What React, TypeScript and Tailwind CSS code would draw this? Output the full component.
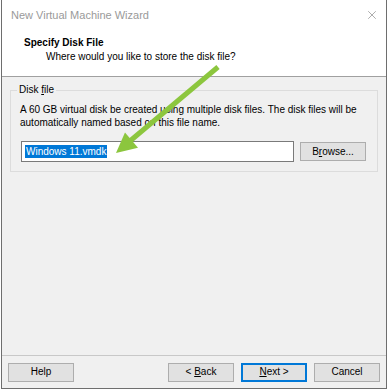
import { X } from 'lucide-react';

function WinButton({ children, primary, className = '' }: { children: React.ReactNode; primary?: boolean; className?: string }) {
  return (
    <button
      className={`h-[19px] bg-[#e1e1e1] text-[10px] text-black ${
        primary ? 'border-2 border-[#0078d7]' : 'border border-[#adadad]'
      } ${className}`}
    >
      {children}
    </button>
  );
}

export default function App() {
  return (
    <div className="relative w-[388px] h-[390px] bg-white font-['Liberation_Sans',Arial,sans-serif] text-[10px] leading-[12px] text-black">
      <div className="ml-[1px] w-[386px] h-[389px] border border-t-0 border-[#6e6e6e] bg-[#f0f0f0] flex flex-col">
        {/* Title bar + header */}
        <div className="bg-white h-[76px] flex flex-col">
          <div className="h-[30px] flex items-center justify-between pl-[9px] pr-[7px]">
            <span className="text-[11px] text-[#9a9a9a]">New Virtual Machine Wizard</span>
            <X className="w-[14px] h-[14px] text-[#8a8a8a]" strokeWidth={1.2} />
          </div>
          <div className="pl-[22px] pt-[7px] font-bold">Specify Disk File</div>
          <div className="pl-[44px] pt-[2px]">Where would you like to store the disk file?</div>
        </div>
        <div className="h-px bg-[#a0a0a0]" />

        {/* Body */}
        <div className="flex-1 px-[8px] pt-[7px]">
          <fieldset className="border border-[#dcdcdc] h-[88px] px-[9px]">
            <legend className="ml-[-3px] px-[2px]">
              Disk <span className="underline">f</span>ile
            </legend>
            <p className="mt-[7px] leading-[13px]">
              A 60 GB virtual disk be created using multiple disk files. The disk files will be
              <br />
              automatically named based on this file name.
            </p>
            <div className="flex items-center mt-[12px] ml-[1px]">
              <div className="w-[273px] h-[21px] bg-white border border-[#7a7a7a] flex items-center pl-[3px]">
                <span className="bg-[#0078d7] text-white px-px leading-[13px]">Windows 11.vmdk</span>
              </div>
              <WinButton className="ml-[6px] w-[66px] h-[18px]">
                B<span className="underline">r</span>owse...
              </WinButton>
            </div>
          </fieldset>
        </div>

        {/* Footer */}
        <div className="h-px bg-[#c8c8c8]" />
        <div className="h-[32px] flex items-center px-[6px]">
          <WinButton className="w-[66px]">Help</WinButton>
          <WinButton className="w-[66px] ml-auto">
            &lt; <span className="underline">B</span>ack
          </WinButton>
          <WinButton primary className="w-[66px] ml-[7px]">
            <span className="underline">N</span>ext &gt;
          </WinButton>
          <WinButton className="w-[66px] ml-[7px]">Cancel</WinButton>
        </div>
      </div>

      {/* Green annotation arrow */}
      <svg className="absolute left-0 top-0 pointer-events-none" width="388" height="390">
        <line x1="218" y1="67" x2="130" y2="141" stroke="#8cc63e" strokeWidth="5" strokeLinecap="butt" />
        <polygon points="116,153 125,132.5 138,147.7" fill="#8cc63e" />
      </svg>
    </div>
  );
}
